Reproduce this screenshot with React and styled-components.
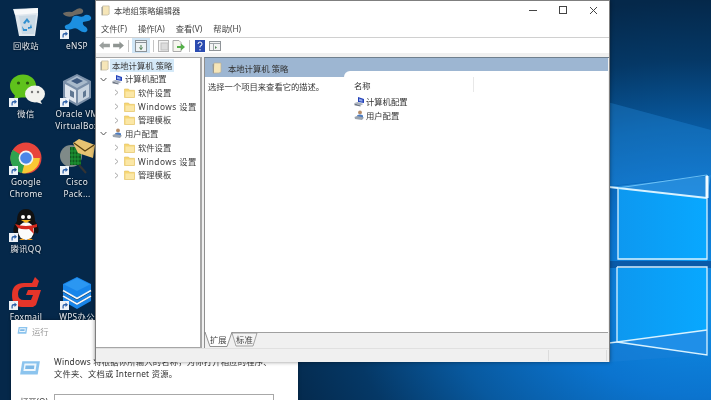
import React from "react";
import styled, { createGlobalStyle } from "styled-components";

const Global = createGlobalStyle`
  html, body { margin: 0; padding: 0; width: 711px; height: 400px; overflow: hidden; }
  body { font-family: "Noto Sans", "Noto Sans CJK SC", sans-serif; }
  #root { width: 711px; height: 400px; }
`;

const Desktop = styled.div`
  position: relative;
  width: 711px;
  height: 400px;
  overflow: hidden;
  filter: blur(0.45px);
  background:
    radial-gradient(ellipse 440px 300px at 700px 300px, #0f8ee6 0%, #0b74cf 32%, #08599f 58%, #053866 80%, #05284a 100%),
    #05284a;
`;

const Wallpaper = styled.svg`
  position: absolute;
  inset: 0;
`;

const Cell = styled.div`
  position: absolute;
  left: ${p => 1 + p.$col * 51}px;
  top: ${p => 4 + p.$row * 67.75}px;
  width: 50px;
  padding-top: 2px;
  display: flex;
  flex-direction: column;
  align-items: center;
`;

const IconBox = styled.div`
  position: relative;
  width: 32px;
  height: 32px;
`;

const Badge = styled.svg`
  position: absolute;
  left: -1px;
  top: 24px;
`;

const Label = styled.div`
  margin-top: 2px;
  width: 62px;
  color: #e8eef5;
  font-size: 8.3px;
  line-height: 12px;
  letter-spacing: 0.35px;
  text-align: center;
  white-space: pre-line;
  text-shadow: 0 0 2px #000;
`;

const Shortcut = () => (
  <Badge width="9" height="9" viewBox="0 0 9 9">
    <rect width="9" height="9" fill="#eef3f8" />
    <path d="M2.5 7.5V5q0-2 2-2h1V1.5L8 3.8 5.5 6V4.6h-1q-.8 0-.8 1v1.9z" fill="#2a5fa8" />
  </Badge>
);

const Recycle = () => (
  <svg width="32" height="32" viewBox="0 0 32 32">
    <path d="M3 3l25-1 0 7-3 21H9L5 9z" fill="#dfe7ee" />
    <path d="M4 4l24-2 0 5-23 2z" fill="#f7f9fa" />
    <path d="M9 10l17-1-2 19H12z" fill="#cbdae5" />
    <path d="M17 12l3 4-2 1-1-2-2 3-2-1zM21 18l1 4-4 1v-2h2zM12 20l2 3h3v2h-4z" fill="#2e8fd0" />
  </svg>
);
const Ensp = () => (
  <svg width="32" height="32" viewBox="0 0 32 32">
    <path d="M2 7q5-2 9-1l5-3q4-2 6 1 1 3-3 4l-5 1q-4 3-9 1-3-1-3-3z" fill="#6f6a62" />
    <path d="M5 19q5-1 6-6 1-4 6-3 5 2 7-1 4-1 6 2 1 3-3 4l-5 1q-1 3 3 5 3 3 0 5-3 1-7-2-3-3-7-1-6 2-7-1-1-2 1-3z" fill="#1c8fe0" />
  </svg>
);
const Wechat = () => (
  <svg width="36" height="32" viewBox="0 0 36 32" style={{ marginLeft: -1 }}>
    <ellipse cx="14" cy="12" rx="13" ry="11.5" fill="#5fc21c" />
    <path d="M6 20l-1 6 7-3z" fill="#5fc21c" />
    <circle cx="9.5" cy="9" r="1.6" fill="#2b5a10" />
    <circle cx="18.5" cy="9" r="1.6" fill="#2b5a10" />
    <ellipse cx="26" cy="20" rx="10" ry="8.5" fill="#f2f2ee" />
    <path d="M31 26l2 4-6-2z" fill="#f2f2ee" />
    <circle cx="23" cy="18" r="1.2" fill="#777" />
    <circle cx="29" cy="18" r="1.2" fill="#777" />
  </svg>
);
const Vbox = () => (
  <svg width="32" height="32" viewBox="0 0 32 32">
    <path d="M16 0l14 7v17l-14 8-14-8V7z" fill="#7a8fa8" />
    <path d="M16 2l11 6-11 6-11-6z" fill="#a9bacb" />
    <path d="M4 10l11 6v13L4 23z" fill="#dfe6ee" />
    <path d="M17 16l11-6v13l-11 6z" fill="#c7d3df" />
    <path d="M16 4l6 3-6 3-6-3z" fill="#3e5a80" />
    <path d="M9 16l4 2v6l-4-2zM22 18l3-2v6l-3 2z" fill="#5f7792" />
  </svg>
);
const Chrome = () => (
  <svg width="32" height="32" viewBox="0 0 32 32">
    <circle cx="16" cy="16" r="15.5" fill="#e8453c" />
    <path d="M16 16L2.6 8.2A15.5 15.5 0 0 0 16 31.5z" fill="#2fa24f" />
    <path d="M16 16h13.9A15.5 15.5 0 0 1 12 31z" fill="#f9c935" />
    <path d="M16 16L3 8A15.5 15.5 0 0 0 9 30l7-14z" fill="#2fa24f" />
    <circle cx="16" cy="16" r="7.4" fill="#f4f4f4" />
    <circle cx="16" cy="16" r="5.8" fill="#4a86e8" />
  </svg>
);
const Cisco = () => (
  <svg width="36" height="36" viewBox="0 0 36 36" style={{ marginLeft: -2, marginTop: -4 }}>
    <circle cx="12" cy="18" r="11" fill="#7f8a88" />
    <path d="M20 27l7 8" stroke="#333" strokeWidth="2" />
    <path d="M11 9h11v18H11z" fill="#0f5a1e" />
    <path d="M13 9v18M16 9v18M19 9v18M11 13h11M11 17h11M11 21h11M11 25h11" stroke="#1fa038" strokeWidth=".9" />
    <path d="M14 5l6-4 16 6-2 13-15-5z" fill="#e7c271" />
    <path d="M15 5l11 8 9-6" fill="none" stroke="#5a4010" strokeWidth="1.2" />
  </svg>
);
const QQ = () => (
  <svg width="32" height="32" viewBox="0 0 32 32">
    <path d="M16 0c7 0 9 6 9 12 2 3 5 8 3 12-1 1-2 0-3-1-1 4-3 6-5 7h-8c-2-1-4-3-5-7-1 1-2 2-3 1-2-4 1-9 3-12C7 6 9 0 16 0z" fill="#111" />
    <ellipse cx="16" cy="22" rx="8" ry="9" fill="#fbfbfb" />
    <circle cx="13" cy="8" r="2" fill="#fff" /><circle cx="19" cy="8" r="2" fill="#fff" />
    <path d="M11 11h10l-5 3z" fill="#f5b21c" />
    <path d="M5 15q11 4 22 0v3l-4 1 1 6-5-5q-6 1-11-1z" fill="#d6291e" />
    <path d="M9 31q3-3 6 0zM17 31q3-3 6 0z" fill="#f5a01c" />
  </svg>
);
const Foxmail = () => (
  <svg width="32" height="32" viewBox="0 0 32 32">
    <path d="M25 0l4 4-2 6H15q-7 0-7 7 0 6 6 6h7l2-5h-7l2-5h13l-5 15-3 2H12Q2 30 2 18 2 6 14 6h8z" fill="#e5352a" />
  </svg>
);
const Wps = () => (
  <svg width="32" height="32" viewBox="0 0 32 32">
    <path d="M16 0l14 7v6l-14 8-14-8V7z" fill="#1885ea" />
    <path d="M2 15l14 8 14-8v3l-14 8-14-8z" fill="#1885ea" />
    <path d="M2 20l14 8 14-8v4l-14 8-14-8z" fill="#1885ea" />
    <path d="M16 1L3 7.5 16 14l13-6.5z" fill="#2b97f2" />
    <path d="M2 13.5l14 8 14-8 M2 19l14 8 14-8" fill="none" stroke="#f3f8fd" strokeWidth="1.6" />
  </svg>
);

const icons = [
  { col: 0, row: 0, label: "回收站", I: Recycle },
  { col: 1, row: 0, label: "eNSP", I: Ensp, s: 1 },
  { col: 0, row: 1, label: "微信", I: Wechat, s: 1 },
  { col: 1, row: 1, label: "Oracle VM\nVirtualBox", I: Vbox, s: 1 },
  { col: 0, row: 2, label: "Google\nChrome", I: Chrome, s: 1 },
  { col: 1, row: 2, label: "Cisco\nPack...", I: Cisco, s: 1 },
  { col: 0, row: 3, label: "腾讯QQ", I: QQ, s: 1 },
  { col: 0, row: 4, label: "Foxmail", I: Foxmail, s: 1 },
  { col: 1, row: 4, label: "WPS办公", I: Wps, s: 1 },
];

/* Run dialog behind the editor */
const RunDialog = styled.div`
  position: absolute;
  left: 11px;
  top: 320px;
  width: 287px;
  height: 90px;
  background: #fff;
  box-shadow: 0 0 3px rgba(0,0,0,.35);
  color: #555;
  font-size: 8.3px;
`;
const RunTitle = styled.div`
  height: 21px;
  display: flex;
  align-items: center;
  gap: 4px;
  padding-left: 6px;
  color: #9a9a9a;
`;
const RunBody = styled.div`
  display: flex;
  gap: 13px;
  padding: 15px 0 0 8px;
`;
const RunGlyph = styled.div`
  margin-top: 3px;
  line-height: 0;
`;
const RunText = styled.div`
  color: #333;
  line-height: 12px;
  white-space: nowrap;
  letter-spacing: 0.2px;
`;
const RunRow = styled.div`
  display: flex;
  align-items: center;
  margin-top: 14px;
  padding-left: 9px;
  color: #333;
`;
const RunLabel = styled.span`
  width: 34px;
  white-space: nowrap;
  line-height: 10px;
`;
const RunInput = styled.div`
  width: 218px;
  height: 14px;
  border: 1px solid #a8a8a8;
`;

const RunIcon = ({ size }) => (
  <svg width={size} height={size * 0.8} viewBox="0 0 20 16">
    <path d="M3 2h16l-2 12H1z" fill="#8cc4ee" />
    <path d="M5 4h11l-1 7H4z" fill="#eef7fd" />
    <path d="M6 6h8l-.4 3H5.600z" fill="#7db8e6" />
  </svg>
);

/* Editor window */
const Win = styled.div`
  position: absolute;
  left: 95px;
  top: 0;
  width: 515px;
  height: 362px;
  box-sizing: border-box;
  display: flex;
  flex-direction: column;
  background: #fff;
  border: solid #7f7f7f;
  border-width: 1px 1px 0 1px;
  box-shadow: 0 0 4px rgba(0,0,0,.45);
  color: #333;
  font-size: 8.3px;
`;
const TitleBar = styled.div`
  height: 18px;
  display: flex;
  align-items: center;
  padding-left: 4px;
  gap: 3px;
  color: #444;
`;
const TitleText = styled.span`
  flex: 1;
`;
const WinBtn = styled.div`
  width: 30px;
  height: 18px;
  display: flex;
  align-items: center;
  justify-content: center;
`;
const WinBtns = styled.div`
  display: flex;
  margin-right: 1px;
  gap: 0.5px;
`;
const MenuBar = styled.div`
  height: 18px;
  display: flex;
  align-items: center;
  padding-left: 5px;
  gap: 11px;
  border-bottom: 1px solid #d0d0d0;
  color: #444;
`;
const Toolbar = styled.div`
  height: 15px;
  display: flex;
  align-items: center;
  padding-left: 2px;
`;
const ToolBtn = styled.div`
  width: ${p => p.$w || 15}px;
  height: 15px;
  display: flex;
  align-items: center;
  justify-content: center;
  background: ${p => (p.$active ? "#cfe5f6" : "transparent")};
`;
const ToolSep = styled.div`
  width: 1px;
  height: 12px;
  margin: 0 3px;
  background: #c4c4c4;
`;
const Panes = styled.div`
  flex: 1;
  min-height: 0;
  display: flex;
  gap: 2px;
  padding-top: 3px;
  border-top: 1px solid #f0f0f0;
  background: #f0f0f0;
`;
const TreePane = styled.div`
  width: 106px;
  box-sizing: border-box;
  background: #fff;
  border: 1px solid #a6a6a6;
  border-right-width: 2px;
  border-left: none;
  padding-top: 0.5px;
`;
const TreeRow = styled.div`
  height: 13.72px;
  display: flex;
  align-items: center;
  padding-left: ${p => p.$indent}px;
  white-space: nowrap;
  color: #3a3a3a;
  letter-spacing: ${p => (p.$latin ? "0.45px" : "0")};
`;
const Chevron = styled.svg`
  width: 7px;
  height: 7px;
  margin-right: ${p => p.$gap}px;
  flex: none;
`;
const RowText = styled.span`
  background: ${p => (p.$sel ? "#d4e9f8" : "transparent")};
  padding: 0 2px;
  margin-left: ${p => p.$ml}px;
  line-height: 13.7px;
`;
const DetailPane = styled.div`
  flex: 1;
  min-width: 0;
  box-sizing: border-box;
  display: flex;
  flex-direction: column;
  border-top: 1px solid #6f7f8e;
  border-left: 1px solid #8f8f8f;
`;
const DetailArea = styled.div`
  position: relative;
  flex: 1;
  background: #fff;
  border-bottom: 1px solid #a0a0a0;
  margin-right: 1px;
`;
const DetailHead = styled.div`
  height: 19px;
  background: #9db6d2;
  box-sizing: border-box;
  padding-left: 6px;
  display: flex;
  align-items: center;
  gap: 5px;
  color: #333;
`;
const HeadNotch = styled.div`
  position: absolute;
  left: 139px;
  top: 13px;
  right: 0;
  height: 6px;
  background: #fff;
  border-top-left-radius: 9px;
`;
const DetailBody = styled.div`
  display: grid;
  grid-template-columns: 145px 1fr;
  padding-left: 3px;
`;
const Desc = styled.div`
  padding-top: 3px;
  line-height: 13px;
  white-space: nowrap;
`;
const ListCol = styled.div`
  padding-left: 1px;
`;
const ListHead = styled.div`
  height: 15px;
  width: 119px;
  display: flex;
  align-items: center;
  border-right: 1px solid #e8e8e8;
  margin-bottom: 2px;
`;
const ListRow = styled.div`
  height: 14px;
  display: flex;
  align-items: center;
  gap: 1px;
`;
const TabStrip = styled.div`
  height: 15px;
  position: relative;
  display: flex;
  align-items: flex-start;
  background: #f0f0f0;
`;
const TabShape = styled.svg`
  width: 56px;
  height: 15px;
  flex: none;
  overflow: visible;
`;
const TabLabels = styled.div`
  position: absolute;
  left: 5px;
  top: 0;
  display: flex;
  gap: 9.5px;
  line-height: 13px;
  color: #444;
`;
const StatusBar = styled.div`
  height: 14px;
  background: #f0f0f0;
  border-top: 1px solid #e0e0e0;
  display: grid;
  grid-template-columns: 453px 58px;
  box-sizing: border-box;
`;
const StatusCell = styled.div`
  border-right: 1px solid #dcdcdc;
  margin: 1px 0;
`;

const Doc = ({ s = 11 }) => (
  <svg width={s} height={s} viewBox="0 0 12 12" style={{ flex: "none" }}>
    <path d="M3 1h7v9l-2 1H2z" fill="#f6e6b8" stroke="#b8b09a" strokeWidth=".7" />
    <path d="M1.500 2.500l1.500-1v9l-1 1z" fill="#9a9a92" />
  </svg>
);
const Folder = () => (
  <svg width="11" height="10" viewBox="0 0 11 10" style={{ flex: "none" }}>
    <path d="M.5 1h4l1 1.300h5V9.500H.5z" fill="#f7d774" stroke="#e2c05e" strokeWidth=".6" />
    <path d="M1.500 3.500h8.500v5.500H1.500z" fill="#fbe7a6" />
  </svg>
);
const Comp = () => (
  <svg width="11" height="11" viewBox="0 0 11 11" style={{ flex: "none" }}>
    <path d="M4 1l6 2v4L4 6z" fill="#2340b8" />
    <path d="M5 2.500l3.500 1.200v2L5 5z" fill="#8fa8e8" />
    <path d="M.5 7l3-1 6 2-3 1.600z" fill="#a8b0bc" />
    <path d="M.5 7.200v2l6 1.200V9.600z" fill="#6d7684" />
  </svg>
);
const User = () => (
  <svg width="11" height="11" viewBox="0 0 11 11" style={{ flex: "none" }}>
    <circle cx="6" cy="2.400" r="1.900" fill="#b58b67" />
    <path d="M3 8V5.500q3-2 6 0V8z" fill="#4d7cc0" />
    <path d="M.5 7l2.500-1 7 1.500-2 2.500-7-1z" fill="#9aa3ae" />
  </svg>
);
const ChevRight = ({ gap }) => (
  <Chevron $gap={gap} viewBox="0 0 7 7"><path d="M2 .8l3 2.700-3 2.700" fill="none" stroke="#a6a6a6" strokeWidth="1" /></Chevron>
);
const ChevDown = ({ gap }) => (
  <Chevron $gap={gap} viewBox="0 0 7 7"><path d="M.6 2l2.900 3 2.900-3" fill="none" stroke="#555" strokeWidth="1" /></Chevron>
);

const Sub = ({ text, latin }) => (
  <TreeRow $indent={17} $latin={latin}>
    <ChevRight gap={4} /><Folder /><RowText $ml={1}>{text}</RowText>
  </TreeRow>
);

const Arrow = ({ flip, c }) => (
  <svg width="11" height="9" viewBox="0 0 12 10" style={{ transform: flip ? "scaleX(-1)" : "none" }}>
    <path d="M0 5l5-4.500V3h7v4H5v2.500z" fill={c} />
  </svg>
);

const Logo = () => (
  <Wallpaper width="711" height="400" viewBox="0 0 711 400">
    <defs>
      <linearGradient id="pane1" x1="0" y1="0" x2="1" y2="0">
        <stop offset="0" stopColor="#0d98f0" /><stop offset="1" stopColor="#08a8ff" />
      </linearGradient>
    </defs>
    <polygon points="600,100 711,130 711,175 610,186" fill="#2a9af0" opacity=".28" />
    <polygon points="600,188 618,188 707,198 711,175 707,176" fill="#3ea9f5" opacity=".5" />
    <polygon points="618,188 707,198 707,261 618,259" fill="url(#pane1)" />
    <polygon points="617,267 707,267 707,330 617,342" fill="url(#pane1)" />
    <polygon points="617,342 707,330 707,355" fill="#1f8fe8" />
    <polygon points="600,342 617,342 707,355 610,362" fill="#1a7fd8" opacity=".5" />
    <polygon points="600,261 711,261 711,268 600,268" fill="#0a5aa8" />
    <g fill="none" stroke="#d8f2ff" strokeWidth="1.3">
      <path d="M609 187L618 188L707 198" strokeWidth="1.8" />
      <path d="M618 188V259H707V175" />
      <path d="M617 267H707V355L617 342" />
      <path d="M617 267V342L707 330" />
      <path d="M609 343L617 342" />
      <path d="M618 188L707 175" stroke="#7fd0ff" strokeWidth=".8" />
    </g>
    <path d="M707 176V198" stroke="#f2fbff" strokeWidth="3" />
  </Wallpaper>
);

export default function App() {
  return (
    <Desktop>
      <Global />
      <Logo />
      {icons.map(({ col, row, label, I, s }) => (
        <Cell key={label} $col={col} $row={row}>
          <IconBox><I />{s ? <Shortcut /> : null}</IconBox>
          <Label>{label}</Label>
        </Cell>
      ))}

      <RunDialog>
        <RunTitle><RunIcon size={11} /><span>运行</span></RunTitle>
        <RunBody>
          <RunGlyph><RunIcon size={22} /></RunGlyph>
          <RunText>
            Windows 将根据你所输入的名称，为你打开相应的程序、<br />文件夹、文档或 Internet 资源。
          </RunText>
        </RunBody>
        <RunRow><RunLabel>打开(O):</RunLabel><RunInput /></RunRow>
      </RunDialog>

      <Win>
        <TitleBar>
          <Doc />
          <TitleText>本地组策略编辑器</TitleText>
          <WinBtns>
            <WinBtn><svg width="9" height="9"><path d="M1 4.500h8" stroke="#444" /></svg></WinBtn>
            <WinBtn><svg width="9" height="9"><rect x="1.500" y=".5" width="7" height="7" fill="none" stroke="#444" /></svg></WinBtn>
            <WinBtn><svg width="9" height="9"><path d="M1 1l7 7M8 1L1 8" stroke="#444" /></svg></WinBtn>
          </WinBtns>
        </TitleBar>
        <MenuBar>
          <span>文件(F)</span><span>操作(A)</span><span>查看(V)</span><span>帮助(H)</span>
        </MenuBar>
        <Toolbar>
          <ToolBtn $w={13}><Arrow c="#9a9f9d" /></ToolBtn>
          <ToolBtn $w={14}><Arrow flip c="#8f9592" /></ToolBtn>
          <ToolSep />
          <ToolBtn $active $w={18}>
            <svg width="12" height="12"><rect x=".5" y=".5" width="11" height="11" fill="#eef2f4" stroke="#8a9298" /><path d="M1 2.500h10" stroke="#8a9298" /><path d="M6 5v4.500M4.500 7.500l1.500 2 1.500-2" stroke="#4a7a50" fill="none" /></svg>
          </ToolBtn>
          <ToolSep />
          <ToolBtn $w={13}>
            <svg width="11" height="12"><rect x=".5" y=".5" width="10" height="11" fill="#f4f4f4" stroke="#b5b5b5" /><rect x="3" y="3" width="7" height="7" fill="#dcdcdc" stroke="#c0c0c0" /></svg>
          </ToolBtn>
          <ToolBtn $w={16}>
            <svg width="13" height="12"><path d="M1 .5h6l2 2v9H1z" fill="#f6f6ee" stroke="#aaa" /><path d="M5 6h4V3.500L13 7l-4 3.500V8H5z" fill="#56b04a" /></svg>
          </ToolBtn>
          <ToolSep />
          <ToolBtn $w={13}>
            <svg width="10" height="12"><rect width="10" height="12" fill="#2b4bb0" /><path d="M3 4q0-2 2-2t2 2-2 2v1.500M5 9v1.500" stroke="#fff" fill="none" /></svg>
          </ToolBtn>
          <ToolBtn $w={17}>
            <svg width="12" height="10"><rect x=".5" y=".5" width="11" height="9" fill="#f4f4f4" stroke="#8f9498" /><path d="M1 2.500h10M4.500 3v6" stroke="#a0a6aa" /><path d="M6 5l2 1.500L6 8z" fill="#5a8a5a" /></svg>
          </ToolBtn>
        </Toolbar>
        <Panes>
          <TreePane>
            <TreeRow $indent={3}><Doc /><RowText $sel $ml={0}>本地计算机 策略</RowText></TreeRow>
            <TreeRow $indent={4}><ChevDown gap={5} /><Comp /><RowText $ml={0}>计算机配置</RowText></TreeRow>
            <Sub text="软件设置" />
            <Sub text="Windows 设置" latin />
            <Sub text="管理模板" />
            <TreeRow $indent={4}><ChevDown gap={5} /><User /><RowText $ml={0}>用户配置</RowText></TreeRow>
            <Sub text="软件设置" />
            <Sub text="Windows 设置" latin />
            <Sub text="管理模板" />
          </TreePane>
          <DetailPane>
            <DetailArea>
              <DetailHead><Doc s={12} /><span>本地计算机 策略</span></DetailHead>
              <HeadNotch />
              <DetailBody>
                <Desc>选择一个项目来查看它的描述。</Desc>
                <ListCol>
                  <ListHead>名称</ListHead>
                  <ListRow><Comp />计算机配置</ListRow>
                  <ListRow><User />用户配置</ListRow>
                </ListCol>
              </DetailBody>
            </DetailArea>
            <TabStrip>
              <TabShape viewBox="0 0 56 15">
                <path d="M27 0L31 13H48L52 0z" fill="#f4f4f4" stroke="#8f8f8f" strokeWidth=".8" />
                <path d="M0 -1L5 13.500H22L27 -1z" fill="#fff" />
                <path d="M0 -1L5 13.500H22L27 -1" fill="none" stroke="#777" strokeWidth=".8" />
              </TabShape>
              <TabLabels><span>扩展</span><span>标准</span></TabLabels>
            </TabStrip>
          </DetailPane>
        </Panes>
        <StatusBar><StatusCell /><StatusCell /></StatusBar>
      </Win>
    </Desktop>
  );
}
